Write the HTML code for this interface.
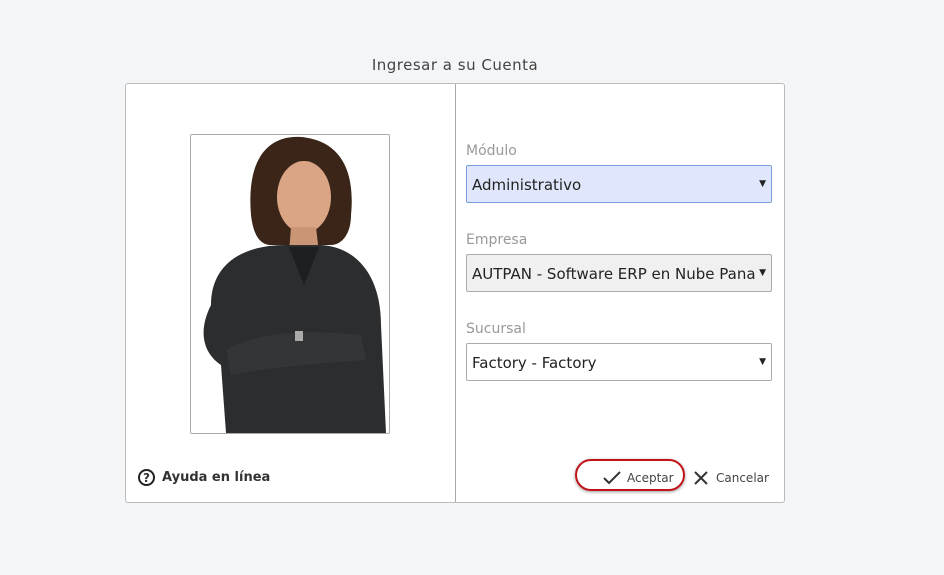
<!DOCTYPE html>
<html><head><style>
body{margin:0;width:944px;height:575px;background:#f4f5f7;font-family:"DejaVu Sans","Liberation Sans",sans-serif;position:relative;overflow:hidden}
.t{position:absolute;left:0;width:910px;text-align:center;top:56px;font-size:15px;color:#444;letter-spacing:.5px}
.card{position:absolute;left:125px;top:83px;width:658px;height:418px;background:#fff;border:1px solid #bbb;border-radius:3px}
.div{position:absolute;left:329px;top:0;bottom:0;border-left:1px solid #aaa}
.photo{position:absolute;left:64px;top:50px;width:198px;height:298px;border:1px solid #aaa;border-radius:2px;overflow:hidden;background:#fff}
.lbl{position:absolute;left:340px;font-size:14px;color:#999}
.sel{position:absolute;left:340px;width:306px;height:38px;border:1px solid #aaa;border-radius:2px;font-size:15px;color:#222;box-sizing:border-box;padding:10px 5px;white-space:nowrap;overflow:hidden}
.sel:after{content:"▼";position:absolute;right:5px;top:13px;font-size:9px}
.help{position:absolute;left:12px;top:385px;font-size:13px;font-weight:bold;color:#333}
.help span{display:inline-block;width:17px;height:17px;border:2px solid #222;border-radius:50%;text-align:center;line-height:14px;font-size:12px;margin-right:7px;box-sizing:border-box;vertical-align:middle}
.ok{position:absolute;left:449px;top:375px;width:110px;height:32px;border:2px solid #c0141a;border-radius:18px;box-shadow:0 1px 3px #999;box-sizing:border-box}
.btxt{position:absolute;font-size:12px;color:#444;top:387px}
</style></head><body>
<div class="t">Ingresar a su Cuenta</div>
<div class="card">
<div class="div"></div>
<div class="photo"><svg width="198" height="298" viewBox="0 0 198 298">
<path d="M60 80 C55 20 80 0 110 2 C145 5 165 30 160 80 C160 100 150 110 140 110 L80 110 C68 110 62 98 60 80Z" fill="#3a2518"/>
<ellipse cx="113" cy="62" rx="27" ry="36" fill="#d9a584"/>
<path d="M100 92 L125 92 L128 118 L98 118Z" fill="#c99575"/>
<path d="M20 170 C20 130 50 110 95 110 L130 110 C165 112 190 140 190 190 L195 298 L35 298 L30 230 C15 220 5 200 20 170Z" fill="#2b2d2f"/>
<path d="M98 112 L113 150 L128 112Z" fill="#1e1f20"/>
<path d="M35 215 C70 195 120 195 170 200 L175 225 C130 228 80 232 40 240Z" fill="#333537"/>
<rect x="104" y="196" width="8" height="10" fill="#aaa"/>
</svg></div>
<div class="lbl" style="top:59px">Módulo</div>
<div class="sel" style="top:81px;background:#e0e6fb;border-color:#7a9ee0">Administrativo</div>
<div class="lbl" style="top:148px">Empresa</div>
<div class="sel" style="top:170px;background:#f0f0f0">AUTPAN - Software ERP en Nube Pana</div>
<div class="lbl" style="top:237px">Sucursal</div>
<div class="sel" style="top:259px;background:#fff">Factory - Factory</div>
<div class="help"><span>?</span>Ayuda en línea</div>
<div class="ok"></div>
<svg style="position:absolute;left:476px;top:386px" width="20" height="16"><path d="M2 8 L7 13 L18 2" stroke="#333" stroke-width="2" fill="none"/></svg>
<div class="btxt" style="left:501px">Aceptar</div>
<svg style="position:absolute;left:567px;top:386px" width="16" height="16"><path d="M2 2 L14 14 M14 2 L2 14" stroke="#333" stroke-width="2"/></svg>
<div class="btxt" style="left:590px">Cancelar</div>
</div>
</body></html>
